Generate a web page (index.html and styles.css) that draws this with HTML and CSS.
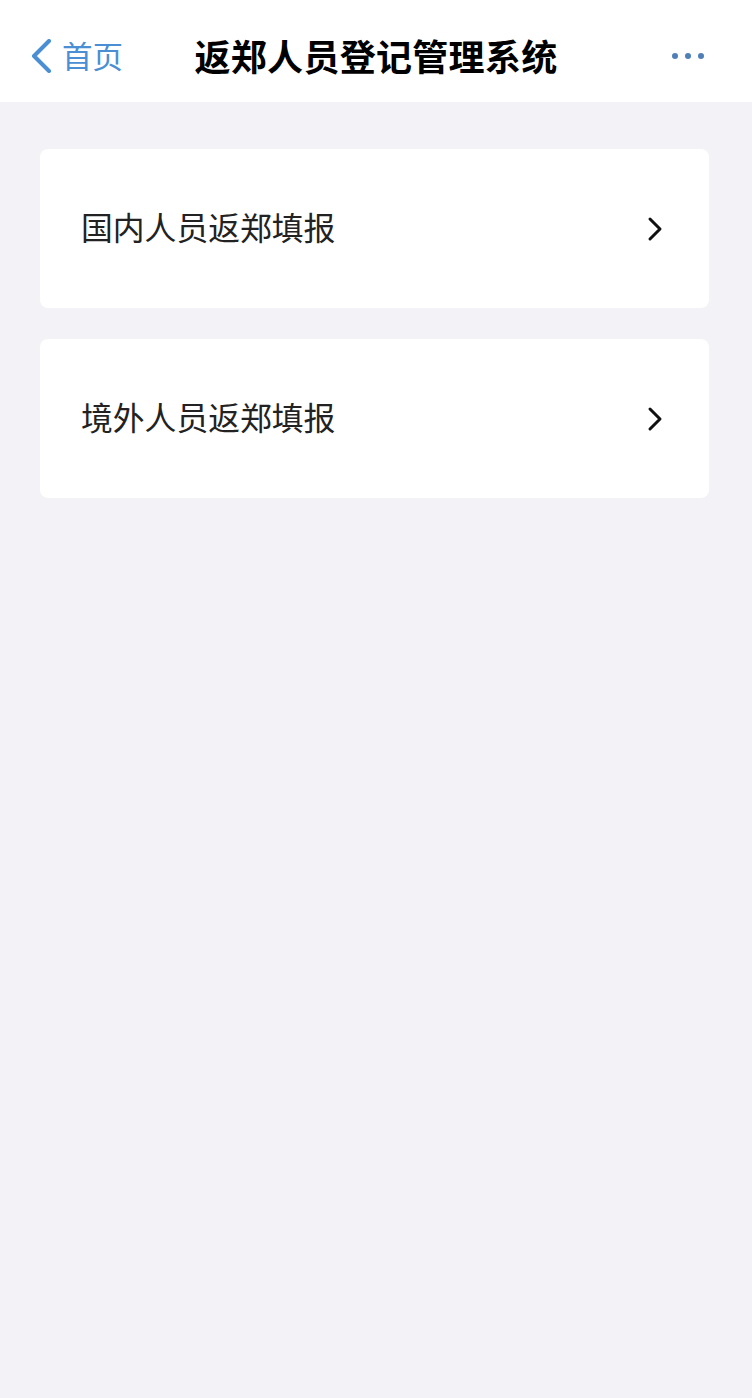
FILE: index.html
```html
<!DOCTYPE html>
<html lang="zh-CN">
<head>
<meta charset="utf-8">
<title>返郑人员登记管理系统</title>
<link rel="stylesheet" href="styles.css">
</head>
<body>
<header class="nav">
  <div class="nav-left">
    <svg class="back-icon" width="24" height="34" viewBox="0 0 24 34"><path d="M20 2 L5 17 L20 32" fill="none" stroke="#4a8fd3" stroke-width="4" stroke-linecap="round" stroke-linejoin="round"/></svg>
    <span class="back-text">首页</span>
  </div>
  <h1 class="nav-title">返郑人员登记管理系统</h1>
  <div class="nav-right">
    <span class="dot"></span><span class="dot"></span><span class="dot"></span>
  </div>
</header>
<main class="list">
  <a class="card">
    <span class="card-text">国内人员返郑填报</span>
    <svg class="chev" width="16" height="26" viewBox="0 0 16 26"><path d="M3 3 L13 13 L3 23" fill="none" stroke="#111" stroke-width="3" stroke-linecap="round" stroke-linejoin="round"/></svg>
  </a>
  <a class="card">
    <span class="card-text">境外人员返郑填报</span>
    <svg class="chev" width="16" height="26" viewBox="0 0 16 26"><path d="M3 3 L13 13 L3 23" fill="none" stroke="#111" stroke-width="3" stroke-linecap="round" stroke-linejoin="round"/></svg>
  </a>
</main>
</body>
</html>
```
FILE: styles.css
```css
html, body {
  margin: 0;
  padding: 0;
}
body {
  background: #f2f2f7;
  font-family: "Noto Sans CJK SC", "Noto Sans", sans-serif;
  min-height: 1398px;
}
.nav {
  position: relative;
  height: 102px;
  box-sizing: border-box;
  padding-top: 10px;
  background: #ffffff;
  display: flex;
  align-items: center;
  justify-content: center;
}
.nav-left {
  position: absolute;
  left: 29px;
  top: 10px;
  bottom: 0;
  display: flex;
  align-items: center;
  gap: 9px;
}
.back-icon {
  display: block;
}
.back-text {
  font-size: 30.5px;
  color: #4a8fd3;
  line-height: 1;
  margin-top: -1px;
}
.nav-title {
  margin: 0;
  font-size: 36px;
  font-weight: 700;
  color: #000;
  line-height: 1;
  letter-spacing: 0.3px;
  margin-top: -2px;
}
.nav-right {
  position: absolute;
  right: 48px;
  top: 10px;
  bottom: 0;
  display: flex;
  align-items: center;
  gap: 7px;
}
.dot {
  width: 6px;
  height: 6px;
  border-radius: 50%;
  background: #4f7fb5;
}
.list {
  padding: 47px 43px 0 40px;
  display: flex;
  flex-direction: column;
  gap: 31px;
}
.card {
  height: 159px;
  background: #ffffff;
  border-radius: 8px;
  display: flex;
  align-items: center;
  justify-content: space-between;
  padding: 0 46px 0 41px;
}
.card-text {
  font-size: 31.8px;
  color: #222;
  line-height: 1;
  margin-top: -3px;
}
.chev {
  display: block;
}
```
